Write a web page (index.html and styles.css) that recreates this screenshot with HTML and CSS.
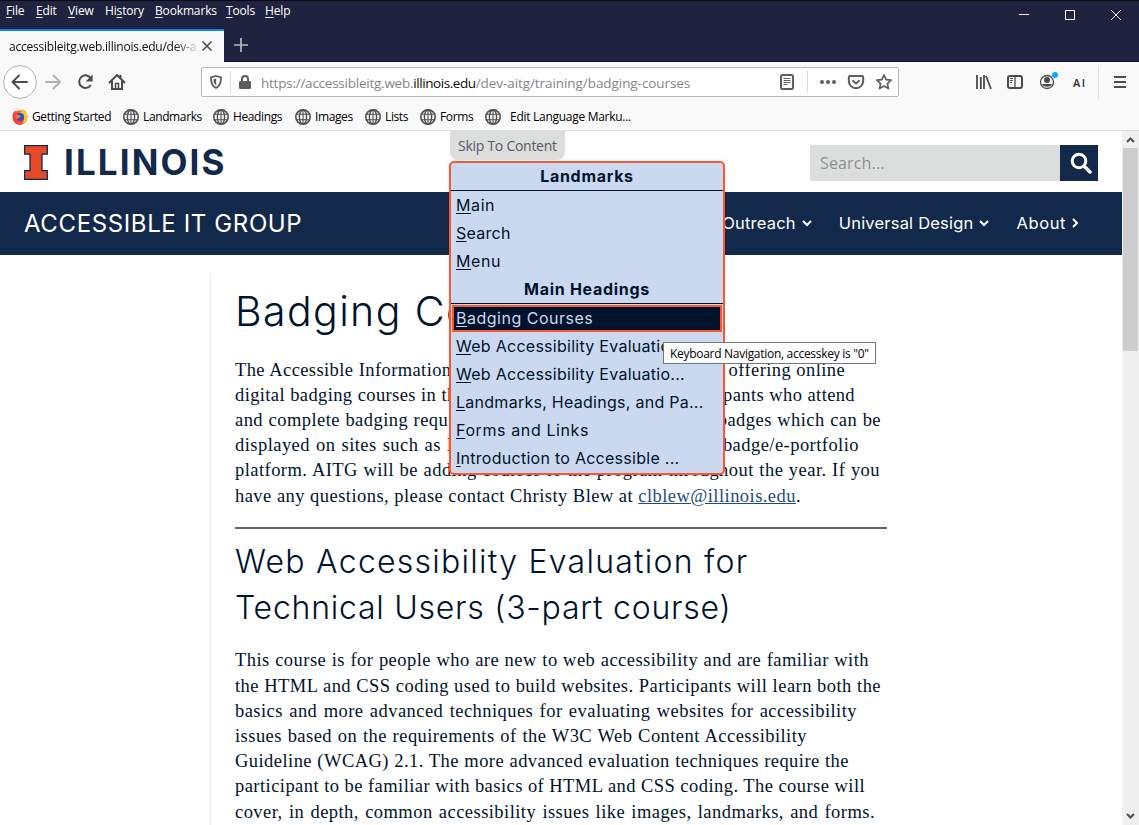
FILE: index.html
```html
<!DOCTYPE html>
<html lang="en">
<head>
<meta charset="utf-8">
<title>Badging Courses</title>
<link rel="stylesheet" href="styles.css">
</head>
<body>
<svg class="defs" width="0" height="0">
  <symbol id="globe" viewBox="0 0 16 16"><g fill="none" stroke="#4e4e50" stroke-width="1.4"><circle cx="8" cy="8" r="7.2" stroke-width="1.6"/><ellipse cx="8" cy="8" rx="3.6" ry="7"/><path d="M8 1v14M1.5 5.2h13M1.5 10.8h13" stroke-width="1.1"/></g></symbol>
</svg>
<header class="titlebar">
  <nav class="menus">
    <span><u>F</u>ile</span><span><u>E</u>dit</span><span><u>V</u>iew</span><span>Hi<u>s</u>tory</span><span><u>B</u>ookmarks</span><span><u>T</u>ools</span><span><u>H</u>elp</span>
  </nav>
  <div class="tabs">
    <div class="tab"><span class="tab-title">accessibleitg.web.illinois.edu/dev-a</span>
      <svg class="tab-close" width="12" height="12" viewBox="0 0 12 12"><path d="M1.5 1.5l9 9M10.5 1.5l-9 9" stroke="#4a4a4f" stroke-width="1.5"/></svg>
    </div>
    <svg class="new-tab" width="14" height="14" viewBox="0 0 14 14"><path d="M7 0v14M0 7h14" stroke="#b9b9c2" stroke-width="1.7"/></svg>
  </div>
  <div class="window-buttons">
    <svg width="103" height="12" viewBox="0 0 103 12" fill="none" stroke="#fff"><path d="M0 5.5h10M46.500 1.500h9v9h-9zM92 1l10 10M102 1l-10 10"/></svg>
  </div>
</header>
<div class="toolbar">
  <svg class="nav-icons" width="130" height="34" viewBox="0 0 130 34" fill="none" stroke="#4a4a4f" stroke-width="2">
    <circle cx="17" cy="17" r="16.400" fill="#fff" stroke="#b1b1b3" stroke-width="1"/>
    <path d="M24 17H10M16 10.500L9.500 17l6.500 6.500" stroke-linecap="round" stroke-linejoin="round"/>
    <path d="M43 17h14M50.500 10.500L57 17l-6.500 6.500" stroke="#b1b1b3" stroke-linecap="round" stroke-linejoin="round"/>
    <path d="M88 13.600A6.300 6.300 0 1 0 87.800 20"/><path d="M89.600 9.500v7h-7z" fill="#4a4a4f" stroke="none"/>
    <path d="M106.500 17.500L114 10l7.500 7.500" stroke-linecap="round" stroke-linejoin="round"/><path d="M109 16v8h10v-8M117.500 13v-3"/><path d="M112.500 23v-4.500h3V23" stroke-width="1.500"/>
  </svg>
  <div class="address">
    <svg width="12" height="14" viewBox="0 0 12 14"><path d="M6 1L11 2.300C11.200 7 10.500 10.500 6 13 1.500 10.500.800 7 1 2.300z" fill="none" stroke="#5d5d60" stroke-width="1.800" stroke-linejoin="round"/><path d="M6.200 3.500v7C4.200 9 3.400 7 3.400 4.200z" fill="#5d5d60"/></svg>
    <i class="split"></i>
    <svg class="lock" width="12" height="14" viewBox="0 0 12 14"><path d="M3 7V4a3 3 0 0 1 6 0v3" fill="none" stroke="#5d5d60" stroke-width="2"/><rect y="6" width="12" height="8" rx="1.200" fill="#5d5d60"/></svg>
    <span class="url"><span class="sub">https://accessibleitg.web.</span><b>illinois.edu</b>/dev-aitg/training/badging-courses</span>
    <svg class="address-icons" width="113" height="22" viewBox="0 0 113 22" fill="none" stroke="#5d5d60" stroke-width="2">
      <rect x="2" y="4" width="12" height="14" rx="1.500"/><path d="M4.500 7.500h7M4.500 9.500h7M4.500 11.500h7M4.500 13.500h4" stroke-width="1"/>
      <path d="M28.500 0v22" stroke="#dcdcdf" stroke-width="1"/>
      <g fill="#5d5d60" stroke="none"><circle cx="43" cy="11" r="2"/><circle cx="49" cy="11" r="2"/><circle cx="55" cy="11" r="2"/></g>
      <path d="M71 5h12q1.200 0 1.200 1.200V10A7.200 7.200 0 0 1 69.800 10V6.200Q69.800 5 71 5zM73.500 9.200l3.500 3.400 3.500-3.400" stroke-linejoin="round"/>
      <path d="M105 4l2.100 4.600 5 .6-3.700 3.400 1 4.900-4.400-2.500-4.400 2.500 1-4.900-3.700-3.400 5-.6z" stroke-width="1.700" stroke-linejoin="round"/>
    </svg>
  </div>
  <svg class="tool-icons" width="164" height="36" viewBox="0 0 164 36" fill="none" stroke="#4a4a4f" stroke-width="2">
    <path d="M2 11v14M5.800 13v12M9 11v14M11 12l5 13" stroke-width="1.800"/>
    <rect x="33" y="12" width="14" height="12" rx="2"/><path d="M40 12v12" stroke-width="1.300"/><path d="M35 14.500h3M35 16.500h3M35 18.500h2" stroke-width="1"/>
    <circle cx="72" cy="18" r="6.500" stroke-width="1.300"/><circle cx="72" cy="16" r="3" fill="#4a4a4f" stroke="none"/><path d="M67 20h10c-1 3.500-9 3.500-10 0z" fill="#4a4a4f" stroke="none"/><circle cx="80" cy="11" r="3" fill="#00b0ff" stroke="none"/>
    <text x="98" y="22.500" font-size="11" font-weight="600" fill="#2c2c30" stroke="none" textLength="12">AI</text>
    <path d="M123.500 1v34" stroke="#dcdcdf" stroke-width="1"/>
    <path d="M139 13h12M139 18h12M139 23h12"/>
  </svg>
</div>
<nav class="bookmarks">
  <span><svg width="16" height="16" viewBox="0 0 16 16"><circle cx="8" cy="8.500" r="7.300" fill="#ff6a1a"/><path d="M.8 9C0 5 2 3 3 1.500l1.500 2L8 4l3-3.500C15 3 16 7 15 10c-1 4-5 6-8 5.700-3-.2-6-3-6.200-6.700z" fill="#ff3b3b"/><path d="M8 4l2.800-3.500C15 3 16 7 15 10c-.8 3-3 4.800-5 5.400C13 11 12 7 8 4z" fill="#ffc928"/><circle cx="8.300" cy="8" r="3.900" fill="#2458d3"/><path d="M4 6c2-1 4 .2 5 1.500-1 1-3 1-3 2.500-2 0-3-2-2-4z" fill="#ff7a18"/></svg>Getting Started</span>
  <span><svg width="16" height="16"><use href="#globe"/></svg>Landmarks</span>
  <span><svg width="16" height="16"><use href="#globe"/></svg>Headings</span>
  <span><svg width="16" height="16"><use href="#globe"/></svg>Images</span>
  <span><svg width="16" height="16"><use href="#globe"/></svg>Lists</span>
  <span><svg width="16" height="16"><use href="#globe"/></svg>Forms</span>
  <span class="wide"><svg width="16" height="16"><use href="#globe"/></svg>Edit Language Marku...</span>
</nav>
<div class="viewport">
  <main class="page">
    <div class="masthead">
      <svg class="block-i" width="25" height="36" viewBox="0 0 25 36"><path d="M.700.700h22.600v8.500H18v16.500h5.300v8.600H.700v-8.600H6V9.200H.700z" fill="#e84a27" stroke="#13294b" stroke-width="1.300"/></svg>
      <span class="wordmark">ILLINOIS</span>
      <div class="search"><span>Search...</span><button><svg width="22" height="22" viewBox="0 0 22 22" fill="none" stroke="#fff"><circle cx="9" cy="9" r="6.800" stroke-width="3"/><path d="M14 14l6 6" stroke-width="3.400" stroke-linecap="round"/></svg></button></div>
    </div>
    <div class="site-nav">
      <span class="site-title">ACCESSIBLE IT GROUP</span>
      <span class="nav-link">Outreach<svg width="10" height="7" viewBox="0 0 10 7"><path d="M1 1l4 4 4-4"/></svg></span>
      <span class="nav-link">Universal Design<svg width="10" height="7" viewBox="0 0 10 7"><path d="M1 1l4 4 4-4"/></svg></span>
      <span class="nav-link">About<svg width="7" height="10" viewBox="0 0 7 10"><path d="M1 1l4 4-4 4"/></svg></span>
    </div>
    <article class="content">
      <h1>Badging Courses</h1>
      <p class="intro">
        <span class="line">The Accessible Information Technology Group (AITG) is now offering online</span>
        <span class="line">digital badging courses in the area of web accessibility. Participants who attend</span>
        <span class="line">and complete badging requirements are awarded with digital badges which can be</span>
        <span class="line">displayed on sites such as LinkedIn or another online digital badge/e-portfolio</span>
        <span class="line">platform. AITG will be adding courses to the program throughout the year. If you</span>
        <span class="line">have any questions, please contact Christy Blew at <a>clblew@illinois.edu</a>.</span>
      </p>
      <hr>
      <h2><span>Web Accessibility Evaluation for</span><span>Technical Users (3-part course)</span></h2>
      <p class="course">
        <span class="line">This course is for people who are new to web accessibility and are familiar with</span>
        <span class="line">the HTML and CSS coding used to build websites. Participants will learn both the</span>
        <span class="line">basics and more advanced techniques for evaluating websites for accessibility</span>
        <span class="line">issues based on the requirements of the W3C Web Content Accessibility</span>
        <span class="line">Guideline (WCAG) 2.1. The more advanced evaluation techniques require the</span>
        <span class="line">participant to be familiar with basics of HTML and CSS coding. The course will</span>
        <span class="line">cover, in depth, common accessibility issues like images, landmarks, and forms.</span>
      </p>
    </article>
  </main>
  <aside class="scrollbar">
    <svg width="9" height="6" viewBox="0 0 9 6"><path d="M1 5l3.500-3.500L8 5"/></svg>
    <i class="thumb"></i>
    <svg width="9" height="6" viewBox="0 0 9 6"><path d="M1 1l3.500 3.500L8 1"/></svg>
  </aside>
  <div class="skip">
    <div class="skip-button">Skip To Content</div>
    <div class="skip-menu">
      <h3>Landmarks</h3>
      <a class="short"><u>M</u>ain</a>
      <a><u>S</u>earch</a>
      <a class="short"><u>M</u>enu</a>
      <h3>Main Headings</h3>
      <a class="active"><u>B</u>adging Courses</a>
      <a><u>W</u>eb Accessibility Evaluatio...</a>
      <a><u>W</u>eb Accessibility Evaluatio...</a>
      <a><u>L</u>andmarks, Headings, and Pa...</a>
      <a class="short"><u>F</u>orms and Links</a>
      <a><u>I</u>ntroduction to Accessible ...</a>
    </div>
  </div>
  <div class="tooltip">Keyboard Navigation, accesskey is "0"</div>
</div>
</body>
</html>
```
FILE: styles.css
```css
* { box-sizing: border-box; }
body { margin: 0; width: 1139px; height: 825px; overflow: hidden; background: #fff; color: #000; font-family: "Open Sans", "Noto Sans", sans-serif; font-size: 12px; }
svg { display: block; flex: none; }
.defs { position: absolute; }
u { text-underline-offset: 2px; }

.titlebar { height: 62px; background: #202340; border-top: 1px solid #08080d; border-bottom: 1px solid #100e28; display: grid; grid-template-columns: 1fr 120px; grid-template-rows: 28px 32px; color: #fff; }
.menus { display: grid; grid-template-columns: 30px 32px 37px 50px 71px 39px 40px; padding-left: 6px; line-height: 20px; letter-spacing: -.15px; white-space: nowrap; }
.tabs { grid-row: 2; display: flex; align-items: center; gap: 10px; }
.tab { width: 224px; height: 33px; border-top: 2px solid #0a84ff; background: #f9f9fa; color: #0c0c0d; display: flex; align-items: center; padding-left: 9px; }
.tab-title { width: 187px; white-space: nowrap; letter-spacing: -.22px; margin-right: 5px; -webkit-mask-image: linear-gradient(to right, #000 165px, transparent 192px); mask-image: linear-gradient(to right, #000 165px, transparent 192px); }
.window-buttons { grid-column: 2; grid-row: 1; padding-top: 8px; }

.toolbar { height: 40px; background: #f9f9fa; display: flex; align-items: center; padding-left: 3px; }
.address { width: 698px; height: 30px; margin-left: 68px; border: 1px solid #b9b9bb; border-radius: 2px; background: #fff; display: flex; align-items: center; padding-left: 8px; }
.split { width: 1px; height: 22px; background: #dcdcdf; margin: 0 8px; }
.url { margin-left: 10px; font-size: 13.5px; letter-spacing: -.07px; padding-top: 1px; color: #858588; white-space: nowrap; width: 518px; }
.url .sub { letter-spacing: -.24px; }
.url b { font-weight: 400; color: #0c0c0d; letter-spacing: -.43px; }
.tool-icons { margin-left: 76px; }

.bookmarks { height: 29px; background: #f9f9fa; border-bottom: 1px solid #dcdcdc; padding: 1px 0 0 12px; display: grid; grid-template-columns: 111px 90px 82px 70px 55px 65px 160px; align-items: center; letter-spacing: -.38px; white-space: nowrap; }
.bookmarks span { display: flex; align-items: center; gap: 4px; }
.bookmarks .wide { gap: 9px; letter-spacing: -.28px; }

.viewport { position: relative; height: 694px; display: flex; overflow: hidden; }
.page { width: 1122px; height: 694px; overflow: hidden; color: #00132c; }
.masthead { height: 61px; display: flex; padding: 14px 24px 0; }
.wordmark { margin: -4px 0 0 15px; font: 700 35px/42px Inter, sans-serif; letter-spacing: 2.1px; color: #13294b; width: 170px; }
.search { margin-left: auto; width: 288px; height: 36px; background: #dcdede; display: flex; align-items: center; justify-content: space-between; padding-left: 10px; font-size: 16px; letter-spacing: .15px; color: #8c9093; }
.search button { width: 38px; height: 36px; border: 0; padding: 0 0 0 10px; background: #13294b; }
.site-nav { height: 63px; background: #13294b; color: #fff; display: flex; align-items: center; padding: 0 43px 2px 24px; font: 400 16.5px/20px Inter, sans-serif; letter-spacing: .2px; }
.site-title { font-size: 24px; letter-spacing: .62px; margin-right: auto; padding-top: 3px; white-space: nowrap; }
.nav-link { display: flex; align-items: center; gap: 6px; margin-left: 27px; }
.nav-link:last-child { letter-spacing: .6px; }
.nav-link svg { fill: none; stroke: #fff; stroke-width: 2; margin-top: 1px; }

.content { margin: 18px 0 0 210px; border-left: 1px solid #ececec; padding-left: 24px; width: 677px; height: 560px; }
h1, h2, h3, p { margin: 0; }
h1 { font: 300 41px/76px Inter, sans-serif; letter-spacing: 1.4px; }
h2 { font: 300 32px/46px Inter, sans-serif; letter-spacing: 1.25px; white-space: nowrap; }
h2 span { display: block; }
h2 span + span { letter-spacing: .75px; }
.content p { font: 18.5px/25.2px "Liberation Serif", serif; letter-spacing: .45px; }
.content .intro { padding-top: 8.6px; }
.content .course { padding-top: 17.4px; }
.line { display: block; white-space: nowrap; text-align-last: justify; }
.intro .line:nth-child(1) { width: 610px; letter-spacing: .4px; }
.intro .line:nth-child(2) { width: 620px; letter-spacing: .38px; }
.intro .line:nth-child(3) { width: 646px; }
.intro .line:nth-child(4) { width: 624px; }
.intro .line:nth-child(5) { width: 645px; }
.intro .line:nth-child(6) { width: 566px; }
.course .line:nth-child(1) { width: 634px; }
.course .line:nth-child(2) { width: 646px; }
.course .line:nth-child(3) { width: 622px; }
.course .line:nth-child(4) { width: 572px; }
.course .line:nth-child(5) { width: 614px; }
.course .line:nth-child(6) { width: 630px; }
.course .line:nth-child(7) { width: 640px; }
.content a { color: #1f4b7d; text-decoration: underline; }
hr { height: 2px; border: 0; background: #646464; margin: 18.2px 0 10px; }

.scrollbar { width: 17px; background: #f0f0f0; display: flex; flex-direction: column; align-items: center; padding: 6px 0; }
.scrollbar svg { fill: none; stroke: #505050; stroke-width: 2; }
.thumb { width: 15px; height: 203px; margin: 5px 0 auto; background: #cdcdcd; }

.skip { position: absolute; left: 449px; top: 0; }
.skip-button { width: 115px; height: 29px; margin-left: 1px; border-radius: 0 0 8px 8px; background: #dcdede; color: #555b5e; font-size: 14px; letter-spacing: -.27px; line-height: 30px; padding-left: 8px; }
.skip-menu { margin-top: 1px; width: 276px; height: 314px; border: 2px solid #ff552e; border-radius: 5px; background: #cad9ef; color: #00132c; font: 400 16px/28px Inter, sans-serif; letter-spacing: .27px; white-space: nowrap; }
.skip-menu h3 { height: 28px; border-bottom: 1px solid #00132c; font-size: 16px; font-weight: 700; line-height: 27px; letter-spacing: .7px; text-align: center; }
.skip-menu h3:not(:first-child) { height: 29px; line-height: 28px; }
.skip-menu a { display: block; height: 28px; padding-left: 5px; }
.skip-menu .short { letter-spacing: .6px; }
.skip-menu u { text-underline-offset: 2px; }
.skip-menu .active { height: 27px; margin: 1px 1px 0; padding-left: 2px; border: 2px solid #ff552e; line-height: 22px; letter-spacing: .5px; background: #00132c; color: #cad9ef; }
.tooltip { position: absolute; left: 663px; top: 211px; width: 213px; height: 22px; padding-left: 6px; border: 1px solid #767676; background: #fff; line-height: 21px; letter-spacing: -.29px; white-space: nowrap; }
```
